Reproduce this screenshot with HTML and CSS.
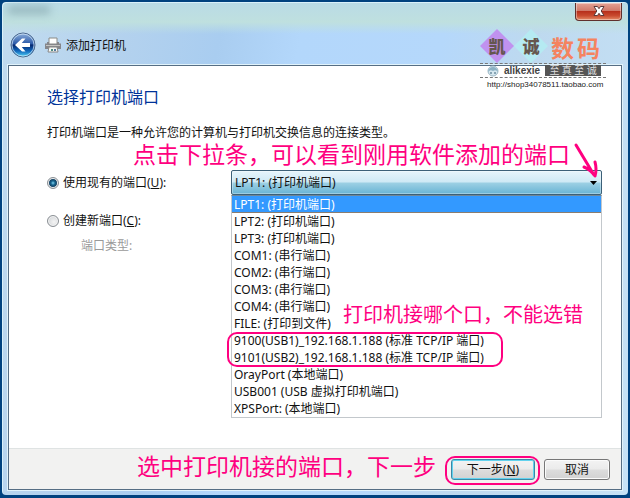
FILE: index.html
```html
<!DOCTYPE html>
<html lang="zh-CN">
<head>
<meta charset="utf-8">
<meta name="viewport" content="width=device-width, initial-scale=1">
<title>添加打印机</title>
<link rel="stylesheet" href="styles.css">
</head>
<body>
<main class="window">
  <header class="titlebar">
    <div class="caption">
      <span class="smudge"></span>
      <button class="close" type="button" aria-label="关闭">
        <svg width="12" height="12" viewBox="0 0 12 12"><path d="M1 1.500h3.500L6 3.700l1.500-2.200H11L8.200 6l2.800 4.500H7.500L6 8.300l-1.500 2.200H1L3.800 6z" fill="#fff" stroke="#5b3a3a" stroke-width="1"/></svg>
      </button>
    </div>
    <div class="wizard-bar">
      <button class="back" type="button" aria-label="返回">
        <svg width="26" height="26" viewBox="0 0 26 26">
          <defs>
            <linearGradient id="orb" x1="0" y1="0" x2="0" y2="1">
              <stop offset="0" stop-color="#8fb0dc"/><stop offset=".45" stop-color="#2c5aa8"/>
              <stop offset=".5" stop-color="#06286f"/><stop offset=".75" stop-color="#1169bd"/><stop offset="1" stop-color="#56d8f8"/>
            </linearGradient>
          </defs>
          <circle cx="13" cy="13" r="12" fill="url(#orb)" stroke="#4c688e"/>
          <circle cx="13" cy="13" r="11" fill="none" stroke="#d9ecfb" stroke-opacity=".7"/>
          <path d="M5 13l7-6.500h3.500L11.800 11H20v4h-8.200l3.700 4.500H12z" fill="#fff"/>
        </svg>
      </button>
      <svg class="printer" width="16" height="16" viewBox="0 0 16 16">
        <path d="M4 1h8v6H4z" fill="#fff" stroke="#8b8b86"/>
        <path d="M0 6.500h2V5h2v2h8V5h2v1.500h2V12H0z" fill="#85868a"/>
        <path d="M1 8.500h14" stroke="#c4c4c0"/>
        <path d="M4 10h8l1 5H3z" fill="#f7f8f4" stroke="#888"/>
        <path d="M6 12h2v2H6z" fill="#4b8b82"/><path d="M9 12h2v2H9z" fill="#56779d"/>
      </svg>
      <span>添加打印机</span>
    </div>
  </header>

  <form class="panel">
    <section class="content">
      <h1>选择打印机端口</h1>
      <p>打印机端口是一种允许您的计算机与打印机交换信息的连接类型。</p>
      <div class="fields">
        <label class="choice"><input type="radio" name="port" checked>使用现有的端口(<u>U</u>):</label>
        <div class="combo">
          <select class="select" aria-label="现有的端口">
            <option>LPT1: (打印机端口)</option>
          </select>
          <svg class="caret" width="7" height="4" viewBox="0 0 7 4"><path d="M0 0h7L3.500 4z" fill="#000"/></svg>
          <ul class="list" role="listbox" aria-label="端口列表">
            <li class="selected" role="option" aria-selected="true">LPT1: (打印机端口)</li>
            <li role="option">LPT2: (打印机端口)</li>
            <li role="option">LPT3: (打印机端口)</li>
            <li role="option">COM1: (串行端口)</li>
            <li role="option">COM2: (串行端口)</li>
            <li role="option">COM3: (串行端口)</li>
            <li role="option">COM4: (串行端口)</li>
            <li role="option">FILE: (打印到文件)</li>
            <li role="option">9100(USB1)_192.168.1.188 (标准 TCP/IP 端口)</li>
            <li role="option">9101(USB2)_192.168.1.188 (标准 TCP/IP 端口)</li>
            <li role="option">OrayPort (本地端口)</li>
            <li role="option">USB001 (USB 虚拟打印机端口)</li>
            <li role="option">XPSPort: (本地端口)</li>
          </ul>
          <span class="ring ring-ports"></span>
          <span class="note note-ports">打印机接哪个口，不能选错</span>
          <span class="note note-combo">点击下拉条，可以看到刚用软件添加的端口</span>
          <svg class="arrow" width="30" height="40" viewBox="0 0 30 40"><path d="M4 4L22 34M12 26q7 3 11 9q2-7 0-14" fill="none" stroke="#ff0080" stroke-width="3" stroke-linecap="round" stroke-linejoin="round"/></svg>
        </div>
        <label class="choice"><input type="radio" name="port">创建新端口(<u>C</u>):</label>
        <span class="port-type">端口类型:</span>
      </div>
    </section>
    <footer class="footer">
      <span class="note note-next">选中打印机接的端口，下一步</span>
      <span class="next-wrap"><button class="button primary" type="button">下一步(<u>N</u>)</button><span class="ring ring-next"></span></span>
      <button class="button cancel" type="button">取消</button>
    </footer>
  </form>

  <aside class="shop">
    <div class="brand">
      <span class="diamond violet">凯</span>
      <span class="diamond cyan">诚</span>
      <span class="word">数</span><span class="word">码</span>
    </div>
    <div class="owner">
      <svg width="12" height="12" viewBox="0 0 12 12"><circle cx="6" cy="6" r="5" fill="#d5e7ef" stroke="#9cb7c5"/><path d="M1 7q1-5 5-5t5 5q-2-3-5-1q-3-2-5 1z" fill="#8bb1c4"/><path d="M4 7v2M8 7v2" stroke="#386078" stroke-width="1"/></svg>
      <b>alikexie</b>
      <span class="motto"><i>至</i><i>真</i><i>至</i><i>诚</i></span>
    </div>
    <a class="url" href="http://shop34078511.taobao.com">http://shop34078511.taobao.com</a>
  </aside>
</main>
</body>
</html>
```
FILE: styles.css
```css
* { box-sizing: border-box; }

body {
  margin: 0;
  min-height: 100vh;
  display: flex;
  padding: 2px 2px 3px;
  background: #00427f;
  color: #111;
  font: 12px/17px "Noto Sans", "Noto Sans CJK SC", sans-serif;
}

button, select { font: inherit; color: inherit; }

.window {
  position: relative;
  flex: 1;
  display: flex;
  flex-direction: column;
  padding: 1px 6px 5px;
  border-radius: 4px;
  box-shadow: inset 1px 1px #d9f1fb;
  background:
    linear-gradient(180deg, #b9dbe6 0, #bfe0df 20px, #b1d4f600 32px),
    linear-gradient(100deg, #c2dcef 0, #b4d2ee 120px, #a9cdf0 220px, #b3d7fb 300px, #b5d8fb 440px, #bed9ef 530px, #c6e2f6 100%);
}

.titlebar { height: 62px; }

.caption {
  display: flex;
  justify-content: space-between;
  height: 26px;
}

.smudge {
  width: 42px;
  height: 8px;
  margin-top: 3px;
  background: #6f8f96;
  opacity: .5;
  filter: blur(4px);
}

.close {
  display: grid;
  place-items: center;
  width: 47px;
  height: 18px;
  padding: 0 0 2px;
  border: 1px solid #60302d;
  border-top: 0;
  border-radius: 0 0 4px 4px;
  background: linear-gradient(#e4a294, #d07a6a 45%, #b8301c 50%, #c94b2f 75%, #e58c68);
  box-shadow: inset 0 0 0 1px #ffffff66;
}

.wizard-bar {
  display: flex;
  align-items: center;
  height: 32px;
  padding-left: 2px;
}

.back {
  width: 26px;
  height: 26px;
  padding: 0;
  border: 0;
  background: none;
}

.printer { margin: 0 5px 0 9px; }

.panel {
  flex: 1;
  display: flex;
  flex-direction: column;
  border: 1px solid #566e84;
  box-shadow: 0 0 0 1px #e1f3fb;
  background: #fff;
}

.content {
  flex: 1;
  padding: 20px 19px 0 38px;
}

h1 {
  margin: 0 0 16px;
  color: #003399;
  font-size: 16px;
  font-weight: 400;
  line-height: 22px;
}

p { margin: 0; }

.fields {
  display: grid;
  grid-template-columns: 184px 1fr;
  grid-template-rows: 25px 25px;
  row-gap: 13px;
  margin-top: 29px;
  align-items: center;
}

.choice {
  grid-column: 1;
  display: flex;
  align-items: center;
  white-space: nowrap;
}

.choice input {
  appearance: none;
  width: 12px;
  height: 12px;
  margin: 0 4px 0 0;
  border: 1px solid #8a8f94;
  border-radius: 50%;
  background: radial-gradient(circle at 60% 60%, #f4f4f4, #c9cdd1);
  box-shadow: inset 0 0 0 1px #f4f4f4;
}

.choice input:checked {
  background: radial-gradient(circle, #7ed3f2 0, #17658f 2px, #123c5c 4px, #e4eaee 5px);
}

.port-type {
  grid-column: 1;
  margin: -9px 0 0 34px;
  color: #9a9a9a;
}

.combo {
  position: relative;
  grid-column: 2;
}

.select {
  display: block;
  appearance: none;
  width: 100%;
  height: 25px;
  padding: 0 24px 0 3px;
  border: 1px solid #3c6078;
  border-radius: 2px;
  background: linear-gradient(#e6f4fb, #cfe9f5 48%, #9dd0e4 52%, #68b3d4);
  box-shadow: inset 0 0 0 1px #ffffff55;
}

.caret {
  position: absolute;
  top: 11px;
  right: 5px;
}

.list {
  position: absolute;
  top: 25px;
  left: 0;
  right: 0;
  margin: 0;
  padding: 0;
  list-style: none;
  border: 1px solid #c3c8cc;
  border-top-color: #6f8797;
  background: #fff;
}

.list li {
  height: 17px;
  padding-left: 2px;
  white-space: nowrap;
}

.list .selected {
  background: #3399ff;
  color: #fff;
  box-shadow: inset 0 -1px #8a7d70;
}

.note {
  position: absolute;
  color: #ff0080;
  font-family: "Noto Sans CJK SC", sans-serif;
  font-size: 23px;
  line-height: 28px;
  white-space: nowrap;
}

.note-combo { top: -31px; left: -98px; }
.note-ports { top: 130px; left: 112px; font-size: 20px; }
.note-next { bottom: 10px; left: 128px; }

.arrow {
  position: absolute;
  top: -29px;
  right: 0;
}

.ring {
  position: absolute;
  border: 2px solid #ff0080;
  border-radius: 10px;
}

.ring-ports {
  top: 162px;
  left: -4px;
  width: 276px;
  height: 35px;
}

.ring-next { inset: -3px -5px -5px -6px; }

.footer {
  position: relative;
  display: flex;
  justify-content: flex-end;
  gap: 9px;
  padding: 10px 11px 9px;
  border-top: 1px solid #dfe3e3;
  background: #f2f2f1;
}

.next-wrap { position: relative; }

.button {
  display: block;
  height: 21px;
  padding: 0;
  border: 1px solid #777;
  border-radius: 3px;
  background: linear-gradient(#f3f3f3, #ebebeb 48%, #dddddd 52%, #d2d2d2);
  box-shadow: inset 0 0 0 1px #fbfbfb;
}

.primary {
  width: 84px;
  border-color: #3b87a5;
  box-shadow: inset 0 0 0 1px #62d2ee;
}

.cancel { width: 66px; }

.shop {
  position: absolute;
  top: 27px;
  right: 22px;
  width: 126px;
  color: #444;
}

.brand {
  display: flex;
  align-items: center;
  height: 34px;
}

.diamond {
  display: grid;
  place-items: center;
  width: 34px;
  height: 34px;
  color: #65564e;
  font-size: 17px;
  font-weight: 900;
  clip-path: polygon(50% 0, 100% 50%, 50% 100%, 0 50%);
}

.violet { background: #c092ef; }
.cyan { background: #b5eaf2; }

.word {
  margin: 4px 0 0 3px;
  color: #f5835f;
  font-size: 23px;
  font-weight: 700;
}

.owner {
  display: flex;
  align-items: center;
  height: 15px;
  padding: 0 5px 0 7px;
  border: 0 dashed #777;
  border-width: 1px 0;
}

.owner b {
  margin: 0 5px;
  font: bold 10px/12px "Liberation Sans", sans-serif;
}

.motto {
  flex: 1;
  display: flex;
  justify-content: space-around;
  padding: 0 3px;
  background: #555;
  color: #ddd;
  font-size: 10px;
  line-height: 11px;
}

.motto i { font-style: normal; }

.url {
  display: block;
  padding-left: 7px;
  color: #222;
  font: 8px/14px "Liberation Sans", sans-serif;
  text-decoration: none;
}
```
